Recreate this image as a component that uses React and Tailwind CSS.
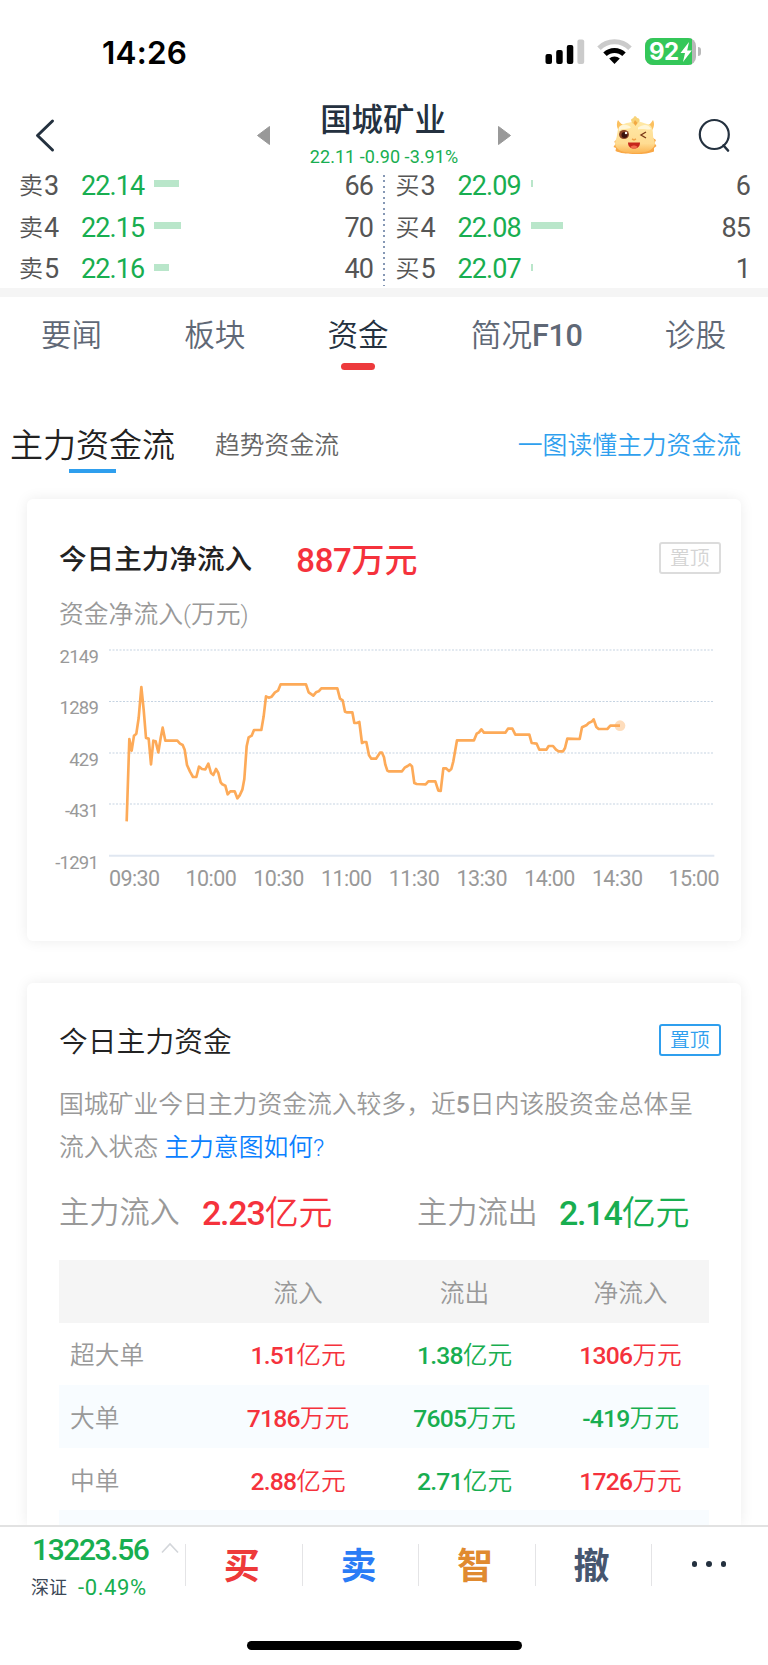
import React from 'react';

const sellOrders = [
  { label: '卖', level: 3, price: '22.14', bar: 25, qty: 66 },
  { label: '卖', level: 4, price: '22.15', bar: 27, qty: 70 },
  { label: '卖', level: 5, price: '22.16', bar: 15, qty: 40 },
];

const buyOrders = [
  { label: '买', level: 3, price: '22.09', bar: 2, qty: 6 },
  { label: '买', level: 4, price: '22.08', bar: 32, qty: 85 },
  { label: '买', level: 5, price: '22.07', bar: 2, qty: 1 },
];

const yLabels = ['2149', '1289', '429', '-431', '-1291'];
const middleTimes = ['10:00', '10:30', '11:00', '11:30', '13:30', '14:00', '14:30'];

const flowRows = [
  { name: '超大单', inflow: ['1.51', '亿元'], outflow: ['1.38', '亿元'], net: ['1306', '万元'], up: true },
  { name: '大单', inflow: ['7186', '万元'], outflow: ['7605', '万元'], net: ['-419', '万元'], up: false },
  { name: '中单', inflow: ['2.88', '亿元'], outflow: ['2.71', '亿元'], net: ['1726', '万元'], up: true },
];

const tradeActions = [
  { label: '买', color: 'text-[#ee3a3a]' },
  { label: '卖', color: 'text-[#2a7cf6]' },
  { label: '智', color: 'text-[#e08a30]' },
  { label: '撤', color: 'text-[#46566f]' },
];

const flowLine =
  '380,995 388,748 395,783 402,738 409,732 416,685 424,592 431,660 438,745 446,747 453,824 460,753 467,755 475,788 482,745 488,714 496,753 532,753 540,762 548,766 554,780 561,826 570,846 579,862 589,862 597,831 606,838 616,839 625,822 633,850 640,856 648,838 655,850 662,878 667,884 676,888 683,914 691,905 704,905 712,926 719,917 727,900 733,868 740,770 746,743 755,738 762,721 784,721 791,680 798,620 806,624 815,621 825,608 834,603 842,584 918,584 926,608 940,618 948,608 956,605 964,596 1012,596 1020,627 1028,632 1035,666 1040,668 1057,668 1063,700 1070,700 1078,697 1086,760 1092,757 1099,757 1107,797 1114,807 1128,807 1140,789 1146,789 1152,803 1156,825 1162,843 1166,845 1206,845 1214,834 1223,829 1230,824 1236,830 1243,880 1250,883 1277,884 1285,875 1306,875 1315,903 1322,904 1330,836 1338,836 1347,844 1354,838 1360,815 1371,752 1422,752 1430,732 1437,728 1444,719 1452,729 1516,729 1524,717 1537,717 1546,735 1588,735 1595,760 1610,762 1618,780 1639,780 1646,769 1659,769 1668,780 1676,785 1689,785 1695,775 1702,747 1739,748 1746,713 1759,707 1766,700 1776,695 1781,689 1789,712 1796,718 1822,718 1831,708 1860,708';

const StatusBar = () => (
  <div className="flex h-[104px] shrink-0 items-start justify-between pl-[102px] pr-[67px] pt-[36px]">
    <span className="mt-px font-['Inter'] text-[31.5px] font-semibold leading-8 tracking-[0.2px] text-black">14:26</span>
    <div className="flex items-start pt-[2px]">
      <svg width="40" height="26" viewBox="0 0 40 26" className="mt-px">
        <rect x="0.5" y="15" width="6.5" height="10" rx="2" fill="#000" />
        <rect x="11.2" y="11" width="6.5" height="14" rx="2" fill="#000" />
        <rect x="21.8" y="6" width="6.5" height="19" rx="2" fill="#000" />
        <rect x="32.4" y="0.5" width="6.8" height="24.5" rx="2" fill="#cbcbcb" />
      </svg>
      <svg width="35" height="26" viewBox="0 0 35 26" className="ml-[12px] mt-px">
        <path d="M2 9.2 A22 22 0 0 1 33 9.2" fill="none" stroke="#cbcbcb" strokeWidth="5" />
        <path d="M8 15.3 A13.7 13.7 0 0 1 27 15.3" fill="none" stroke="#000" strokeWidth="5" />
        <path d="M17.5 25 L12.2 19.6 A7.6 7.6 0 0 1 22.8 19.6 Z" fill="#000" />
      </svg>
      <div className="ml-[13px] flex h-[27px] w-[51px] items-center overflow-hidden rounded-[8px] bg-[#b8b8b8]">
        <div className="flex h-full w-[47px] items-center bg-[#34c759] pl-[4px]">
          <span className="font-['Inter'] text-[24px] font-bold leading-none tracking-[-0.6px] text-white">92</span>
          <svg width="12" height="20" viewBox="0 0 12 20" className="ml-px shrink-0">
            <path d="M9 0 L0.5 11 H5 L3 20 L11.8 8.5 H7.2 Z" fill="#fff" />
          </svg>
        </div>
      </div>
      <div className="ml-[2px] mt-[9px] h-[9px] w-[3px] rounded-r-full bg-[#b8b8b8]" />
    </div>
  </div>
);

const Mascot = () => (
  <svg width="44" height="40" viewBox="0 0 44 40">
    <defs>
      <linearGradient id="face" x1="0" y1="0" x2="0" y2="1">
        <stop offset="0" stopColor="#ffe9a6" />
        <stop offset="0.7" stopColor="#ffdc92" />
        <stop offset="1" stopColor="#fbb554" />
      </linearGradient>
    </defs>
    <path d="M4 24 L1 27 L3 28 L0.5 32 L3 33 L2.5 36 C10 40 34 40 41 36.5 L41 33 L43.5 31 L41.5 28 L43 25 L40 23 Z" fill="#f9a846" />
    <path d="M5 5 C3 9 4 13 6 16 L13 11 C9 10 7 8 5 5 Z M40 5 C42 9 41 13 38 17 L32 11 C37 10 38 8 40 5 Z" fill="#fbc05f" />
    <path d="M5 14 C8 8 15 8 19 7 C24 5 30 8 34 9 C39 10 40 14 40 20 C40 24 42 25 42 29 C40 36 32 38 22 38 C12 38 3 36 2 29 C2 25 4 23 4 20 Z" fill="url(#face)" />
    <path d="M18 5 C18 3.5 20 3.5 20.5 3 C20.5 0.5 23.5 0.5 24 3 C26 3 27 4.5 26.5 6.5 L22.5 10 L19 8 Z" fill="#f8d378" />
    <path d="M22 5 L24.5 8 L22.5 11 L20.5 8 Z" fill="#f2a944" />
    <path d="M6 12.5 C8 8.5 15 9 18 12.5 C15 15 9 12.5 6 16 Z M25 12.5 C30 9 36 9 38 14 C35 15.5 31 13 25 14.5 Z" fill="#fff6d8" />
    <ellipse cx="11" cy="19.5" rx="5" ry="4.6" fill="#8d4426" />
    <circle cx="11.5" cy="20" r="3" fill="#3b120e" />
    <circle cx="13" cy="18" r="1.2" fill="#fff" />
    <path d="M33 17 L28 20 L33 23" fill="none" stroke="#7a3a18" strokeWidth="1.4" />
    <path d="M19 24 L21 25 L23 24" fill="none" stroke="#f0a44a" strokeWidth="1.4" />
    <path d="M15 27.5 H27 C27 31.5 24.5 33.5 21 33.5 C17.5 33.5 15 31.5 15 27.5 Z" fill="#c6261c" />
    <path d="M17.5 32 C19 30 23 30 24.5 32 C22.5 34 19.5 34 17.5 32 Z" fill="#f26a4d" />
  </svg>
);

const Header = () => (
  <div className="flex h-[60px] shrink-0 items-start justify-between pl-[35px] pr-[37px]">
    <div className="flex w-[202px] pt-[14px]">
      <svg width="20" height="36" viewBox="0 0 20 36">
        <path d="M17.5 3 L2.5 17.5 L17.5 32" fill="none" stroke="#24313f" strokeWidth="3" strokeLinecap="round" strokeLinejoin="round" />
      </svg>
    </div>
    <div className="flex w-[254px] items-start justify-between">
      <svg width="13" height="19" viewBox="0 0 13 19" className="mt-[22px]">
        <path d="M12.5 0.5 V18.5 L0.5 9.5 Z" fill="#999" stroke="#999" strokeLinejoin="round" />
      </svg>
      <div className="flex flex-col items-center">
        <h1 className="mt-px pr-[2px] text-[31.4px] font-medium leading-8 text-[#24313f]">国城矿业</h1>
        <p className="mt-[8px] text-[18px] leading-6 tracking-[0.05px] text-[#18ae50]">22.11 -0.90 -3.91%</p>
      </div>
      <svg width="13" height="19" viewBox="0 0 13 19" className="mt-[22px]">
        <path d="M0.5 0.5 V18.5 L12.5 9.5 Z" fill="#999" stroke="#999" strokeLinejoin="round" />
      </svg>
    </div>
    <div className="flex w-[200px] items-start justify-end gap-[40px] pt-[11px]">
      <Mascot />
      <svg width="34" height="38" viewBox="0 0 34 38" className="mt-[2px]">
        <circle cx="17.3" cy="17.5" r="14.5" fill="none" stroke="#24313f" strokeWidth="2.2" />
        <path d="M26.5 28.5 L31 33.5" stroke="#24313f" strokeWidth="2.6" strokeLinecap="round" />
      </svg>
    </div>
  </div>
);

const OrderRow = ({ order }) => (
  <div className="flex h-[41.7px] items-center text-[27px] leading-[38px] tracking-[-0.9px]">
    <span className="flex w-[62px] items-center text-[#555]">
      <span className="mr-[1px] text-[24px] font-[350] tracking-normal">{order.label}</span>
      {order.level}
    </span>
    <span className="w-[73px] text-[#18ae50]">{order.price}</span>
    <span className="mb-[4px] h-[7px] bg-[#b9e6ca]" style={{ width: order.bar }} />
    <span className="ml-auto text-[#555]">{order.qty}</span>
  </div>
);

const OrderBook = () => (
  <div className="flex h-[124px] shrink-0">
    <div className="mt-px w-[383px] pl-[19px] pr-[10px]">
      {sellOrders.map((order) => (
        <OrderRow key={order.level} order={order} />
      ))}
    </div>
    <div className="mt-[11px] h-[111px] w-[1.5px] bg-[repeating-linear-gradient(#8698b5_0_2px,transparent_2px_5.5px)]" />
    <div className="mt-px flex-1 pl-[11px] pr-[18px]">
      {buyOrders.map((order) => (
        <OrderRow key={order.level} order={order} />
      ))}
    </div>
  </div>
);

const Tabs = () => (
  <div className="flex h-[118px] shrink-0 justify-between pl-[41px] pr-[42px] pt-[18px] text-[30.6px] font-[350] leading-[42px] text-[#5f6876]">
    <span>要闻</span>
    <span>板块</span>
    <span className="flex flex-col items-center text-[#24313f]">
      资金
      <span className="mt-[6px] h-[7px] w-[34px] rounded-[3.5px] bg-[#ed3a3c]" />
    </span>
    <span>
      简况<span className="font-medium tracking-[-0.3px]">F10</span>
    </span>
    <span>诊股</span>
  </div>
);

const PinButton = ({ active }) => (
  <button
    className={`mb-[3px] flex h-[32px] w-[62.5px] items-center justify-center rounded-[3px] border-2 pt-[2px] text-[19.8px] font-[350] ${
      active ? 'border-[#2f9fee] text-[#2f9fee]' : 'border-[#dcdcdc] text-[#d4d4d4]'
    }`}
  >
    置顶
  </button>
);

const FlowChart = () => (
  <div className="mt-[16px]">
    <div className="flex">
      <div className="mr-[11px] flex h-[220px] w-[71px] flex-col items-end text-[18.5px] tracking-[-0.8px] text-[#999]">
        {yLabels.map((label) => (
          <span key={label} className="h-[51.4px] shrink-0 leading-[18px]">
            {label}
          </span>
        ))}
      </div>
      <svg width="606" height="220" viewBox="327 475 1818 660" className="shrink-0">
        {[481, 635.5, 790, 943].map((y) => (
          <line key={y} x1="327" x2="2143" y1={y} y2={y} stroke="#c5d3e2" strokeWidth="3.4" strokeDasharray="6 4.5" />
        ))}
        <line x1="327" x2="2143" y1="1098" y2="1098" stroke="#e0e7f1" strokeWidth="6" />
        <polyline points={flowLine} fill="none" stroke="#fdaa58" strokeWidth="8" strokeLinejoin="round" />
        <circle cx="1860" cy="708" r="16" fill="#fdaa58" fillOpacity="0.4" />
      </svg>
    </div>
    <div className="-mt-px ml-[82px] flex w-[610px] justify-between text-[21.5px] leading-6 tracking-[-0.6px] text-[#999]">
      <span>09:30</span>
      <div className="flex w-[474px]">
        {middleTimes.map((time) => (
          <span key={time} className="flex-1 text-center">
            {time}
          </span>
        ))}
      </div>
      <span>15:00</span>
    </div>
  </div>
);

const Amount = ({ value, up }) => (
  <span className={`flex items-center justify-center ${up ? 'text-[#f5323c]' : 'text-[#18ae50]'}`}>
    <span className="font-medium tracking-[-0.8px]">{value[0]}</span>
    <span className="font-[350]">{value[1]}</span>
  </span>
);

const FlowTable = () => (
  <div className="mx-[32px] mt-[26px] text-[24.7px] font-[350] text-[#999]">
    <div className="grid h-[62.6px] grid-cols-[156px_166px_167px_161px] items-center bg-[#f5f5f5] pt-[4px] text-center">
      <span />
      <span>流入</span>
      <span>流出</span>
      <span className="pl-[4px]">净流入</span>
    </div>
    {flowRows.map((row) => (
      <div
        key={row.name}
        className="grid h-[62.6px] grid-cols-[156px_166px_167px_161px] items-center pt-[4px] odd:bg-[#f8fcff] even:bg-white"
      >
        <span className="pl-[11px]">{row.name}</span>
        <Amount value={row.inflow} up />
        <Amount value={row.outflow} />
        <span className="pl-[4px]">
          <Amount value={row.net} up={row.up} />
        </span>
      </div>
    ))}
    <div className="h-[62.6px] bg-[#f8fcff]" />
  </div>
);

const BottomBar = () => (
  <div className="h-[140px] shrink-0 border-t-2 border-[#e2e2e2] bg-white">
    <div className="flex h-[76px] items-center text-[36px] font-bold">
      <div className="flex w-[185px] shrink-0 items-start justify-between pl-[32px] pr-[6px] pt-[8px] font-normal">
        <div>
          <div className="text-[30px] font-medium leading-8 tracking-[-1.4px] text-[#18ae50]">13223.56</div>
          <div className="-ml-px mt-[6px] flex items-center text-[22px] leading-8 tracking-[0.6px] text-[#18ae50]">
            <span className="mr-[11px] text-[18px] tracking-normal text-[#3b4756]">深证</span>
            -0.49%
          </div>
        </div>
        <svg width="18" height="12" viewBox="0 0 18 12" className="mt-[8px]">
          <path d="M1 10.5 L9 2 L17 10.5" fill="none" stroke="#d3d6da" strokeWidth="1.6" />
        </svg>
      </div>
      {tradeActions.map((action) => (
        <div key={action.label} className="flex w-[116.6px] shrink-0 items-center">
          <span className="h-[42px] w-px bg-[#e4e4e6]" />
          <span className={`flex-1 pr-[4px] pt-[3px] text-center ${action.color}`}>{action.label}</span>
        </div>
      ))}
      <span className="h-[42px] w-px bg-[#e4e4e6]" />
      <span className="mb-[2px] flex flex-1 justify-center gap-[9px] pr-[2px]">
        <i className="size-[5.5px] rounded-full bg-[#24313f]" />
        <i className="size-[5.5px] rounded-full bg-[#24313f]" />
        <i className="size-[5.5px] rounded-full bg-[#24313f]" />
      </span>
    </div>
    <div className="mx-auto mt-[38px] h-[9px] w-[275px] rounded-full bg-black" />
  </div>
);

const App = () => {
  return (
    <div className="flex h-[1665px] w-[768px] flex-col overflow-hidden bg-white font-['Roboto','Noto_Sans_CJK_SC',sans-serif]">
      <StatusBar />
      <Header />
      <OrderBook />
      <div className="h-[9px] shrink-0 bg-[#f5f5f5]" />
      <Tabs />

      <div className="flex h-[84px] shrink-0 items-start justify-between pl-[10px] pr-[27px] pt-[11px] leading-[40px]">
        <div className="flex items-start">
          <div className="flex flex-col items-center text-[33px] font-[350] text-[#222]">
            主力资金流
            <span className="mt-[3px] h-[4px] w-[47px] bg-[#2f9fee]" />
          </div>
          <span className="ml-[40px] text-[24.8px] font-[350] text-[#666]">趋势资金流</span>
        </div>
        <span className="text-[24.8px] font-[350] text-[#2f9fee]">一图读懂主力资金流</span>
      </div>

      <main className="flex min-h-0 flex-1 flex-col gap-[42px] px-[27px]">
        <section className="h-[442px] shrink-0 rounded-[6px] bg-white shadow-[0_0_14px_rgba(0,0,0,0.08)]">
          <div className="flex h-[78px] items-center pl-[32px] pr-[20px] pt-[42px]">
            <h2 className="mt-[2px] text-[27.6px] font-medium leading-[34px] text-[#222]">今日主力净流入</h2>
            <div className="ml-[44px] mt-[3px] flex items-center text-[33px] font-medium leading-[34px] text-[#f5323c]">
              <span className="tracking-[-0.3px]">887</span>万元
            </div>
            <div className="ml-auto">
              <PinButton />
            </div>
          </div>
          <p className="mt-[21px] pl-[32px] text-[24.8px] font-[350] leading-[34px] text-[#999]">资金净流入(万元)</p>
          <FlowChart />
        </section>

        <section className="h-[542px] shrink-0 overflow-hidden rounded-t-[6px] bg-white shadow-[0_0_14px_rgba(0,0,0,0.08)]">
          <div className="flex h-[76px] items-center justify-between pl-[32px] pr-[20px] pt-[40px]">
            <h2 className="mt-[2px] text-[28.8px] font-[350] leading-[34px] text-[#222]">今日主力资金</h2>
            <PinButton active />
          </div>
          <p className="mt-[24px] whitespace-nowrap pl-[32px] text-[24.8px] font-[350] leading-[43px] text-[#999]">
            国城矿业今日主力资金流入较多，近<span className="font-medium">5</span>日内该股资金总体呈
            <br />
            流入状态 <a className="text-[#0a80ff]">主力意图如何?</a>
          </p>
          <div className="mt-[23px] flex items-center pl-[32px] text-[30.2px] font-[350] leading-[42px] text-[#999]">
            <span className="w-[143px]">主力流入</span>
            <span className="flex w-[215px] text-[34px] text-[#f5323c]">
              <span className="font-medium tracking-[-1.2px]">2.23</span>亿元
            </span>
            <span className="w-[142px]">主力流出</span>
            <span className="flex text-[34px] text-[#18ae50]">
              <span className="font-medium tracking-[-1.2px]">2.14</span>亿元
            </span>
          </div>
          <FlowTable />
        </section>
      </main>

      <div className="relative shrink-0">
        <BottomBar />
      </div>
    </div>
  );
};

export default App;
